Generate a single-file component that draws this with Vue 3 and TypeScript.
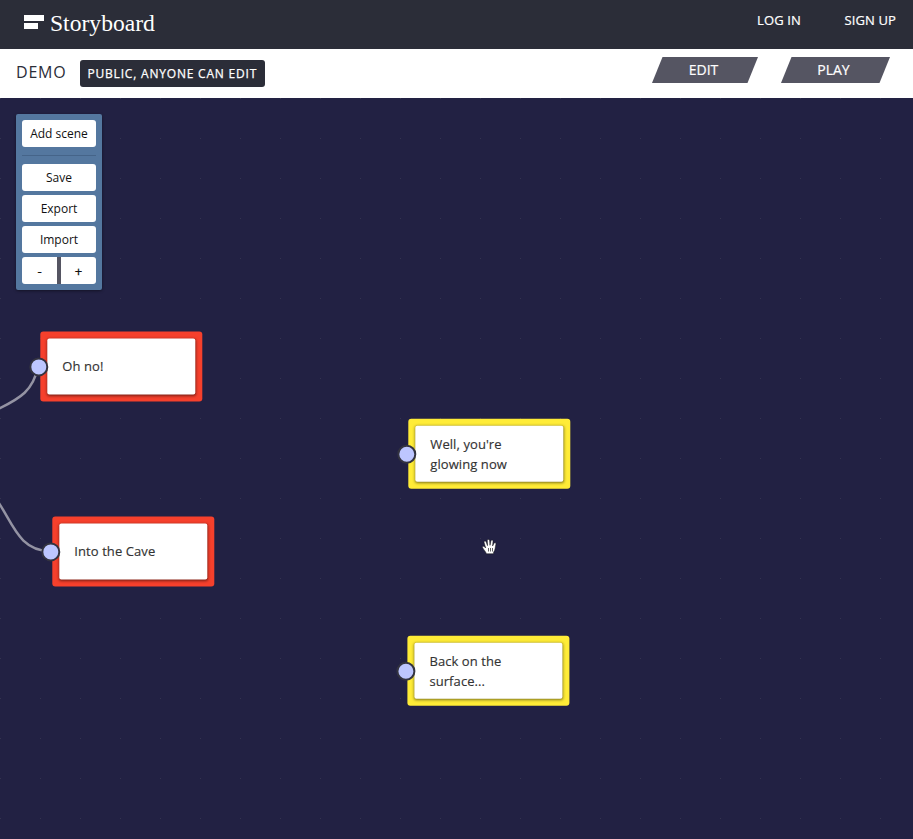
<script setup lang="ts">
interface SceneNode {
  id: number
  text: string
  x: number
  y: number
  color: string
}

const scenes: SceneNode[] = [
  { id: 1, text: 'Oh no!', x: 40.3, y: 233.4, color: '#f6402c' },
  { id: 2, text: 'Into the Cave', x: 52.3, y: 418.4, color: '#f6402c' },
  { id: 3, text: "Well, you're glowing now", x: 408.3, y: 320.7, color: '#ffec37' },
  { id: 4, text: 'Back on the surface...', x: 407.4, y: 537.8, color: '#ffec37' },
]
const links: string[] = ['M-6 313 C22 300 33 292 38 269', 'M-6 398 C12 421 17 453 50 453']
const actions: string[] = ['Save', 'Export', 'Import']
</script>

<template>
  <div class="app">
    <header class="topbar">
      <a class="brand">
        <svg class="logo" width="20" height="15" viewBox="0 0 20 15">
          <path d="M0 0H20V6H0ZM0 8H14V14H0Z" fill="#fff" />
        </svg>
        <span class="brand-name">Storyboard</span>
      </a>
      <nav class="account">
        <a>LOG IN</a>
        <a>SIGN UP</a>
      </nav>
    </header>

    <section class="titlebar">
      <h1>DEMO</h1>
      <span class="badge">PUBLIC, ANYONE CAN EDIT</span>
      <div class="modes">
        <button class="mode edit"><span>EDIT</span></button>
        <button class="mode play"><span>PLAY</span></button>
      </div>
    </section>

    <main class="canvas">
      <svg class="links" width="913" height="741">
        <path v-for="d in links" :key="d" :d="d" />
      </svg>

      <article
        v-for="s in scenes"
        :key="s.id"
        class="scene"
        :style="{ transform: `translate(${s.x}px, ${s.y}px)`, background: s.color }"
      >
        <div class="card">{{ s.text }}</div>
        <i class="port"></i>
      </article>

      <aside class="tools">
        <button>Add scene</button>
        <hr />
        <button v-for="a in actions" :key="a">{{ a }}</button>
        <div class="zoom">
          <button>-</button>
          <button>+</button>
        </div>
      </aside>

      <svg class="hand" width="18" height="18" viewBox="0 0 18 18">
        <path
          d="M5.4 15.8C4.8 13.5 2.6 11.6 1.6 9.7C1 8.4 2.6 7.7 3.5 8.8L4.7 10L3.1 4.6C2.8 3 4.7 2.5 5.2 4L6.5 7.6L6.3 2.6C6.3 1 8.4 1 8.6 2.6L9 7.3L9.9 3C10.2 1.5 12.2 1.9 12 3.4L11.6 8L12.9 5.4C13.6 4.1 15.3 4.8 14.9 6.2C14.2 8.8 14.3 12.2 12.7 14L12.4 15.8Z"
          fill="#fff"
          stroke="#111"
          stroke-width=".5"
        />
        <path d="M7.5 10V13.5M9.5 10V13.5M11.5 10V13.5" stroke="#222" stroke-width=".7" />
      </svg>
    </main>
  </div>
</template>

<style>
body {
  margin: 0;
  overflow: hidden;
}
</style>

<style scoped>
.app {
  width: 913px;
  height: 839px;
  display: flex;
  flex-direction: column;
  font-family: 'Open Sans', 'Noto Sans', sans-serif;
  color: #2b2d38;
}
.app * {
  box-sizing: border-box;
}
button {
  font: inherit;
  border: 0;
  padding: 0;
}
.topbar {
  height: 49px;
  flex: none;
  background: #2b2d38;
  color: #fff;
  display: flex;
  justify-content: space-between;
  padding: 0 17px 0 24px;
}
.brand {
  display: flex;
  gap: 6px;
}
.logo {
  margin-top: 15px;
}
.brand-name {
  font: 23.6px/28px 'Liberation Serif', serif;
  margin-top: 9px;
}
.account {
  display: flex;
  gap: 43.5px;
  font-size: 13px;
  letter-spacing: 0.13px;
  -webkit-text-stroke: 0.2px;
  line-height: 20px;
  padding-top: 10px;
}
.titlebar {
  height: 49px;
  flex: none;
  background: #fff;
  display: flex;
  align-items: flex-start;
  padding: 0 23px 0 16px;
}
h1 {
  width: 51px;
  margin: 12px 13px 0 0;
  font-size: 16px;
  line-height: 22px;
  font-weight: 400;
  letter-spacing: 0.8px;
}
.badge {
  margin-top: 11px;
  width: 185px;
  height: 27px;
  padding-left: 7.5px;
  border-radius: 3px;
  background: #2b2d38;
  color: #fff;
  font-size: 12px;
  -webkit-text-stroke: 0.25px;
  line-height: 27px;
  letter-spacing: 0.8px;
  white-space: nowrap;
}
.modes {
  margin: 8px 0 0 auto;
  display: flex;
  gap: 23px;
}
.mode {
  height: 26px;
  background: #555562;
  color: #fff;
  font-size: 14px;
  -webkit-text-stroke: 0.2px;
  line-height: 26px;
  clip-path: polygon(10.5px 0, 100% 0, calc(100% - 10.5px) 100%, 0 100%);
}
.edit {
  width: 106px;
  padding-right: 3px;
}
.play {
  width: 109px;
  padding-right: 4px;
}
.canvas {
  position: relative;
  flex: 1;
  overflow: hidden;
  background-color: #222143;
  background-image: radial-gradient(circle at 0.5px 0.5px, #34334f 0.7px, transparent 1px);
  background-size: 40px 40px;
}
.links {
  position: absolute;
  left: 0;
  top: 0;
}
.links path {
  fill: none;
  stroke: #9493a3;
  stroke-width: 2.5;
}
.scene {
  position: absolute;
  left: 0;
  top: 0;
  width: 162px;
  height: 70px;
  padding: 7px;
  border-radius: 3px;
}
.card {
  height: 56px;
  display: flex;
  align-items: center;
  padding: 0 40px 1px 15px;
  border-radius: 2px;
  background: #fff;
  box-shadow: 0 1px 3px rgba(0, 0, 0, 0.5);
  color: #333;
  font-size: 13px;
  letter-spacing: 0.08px;
  -webkit-text-stroke: 0.15px;
  line-height: 20px;
}
.port {
  position: absolute;
  left: -11px;
  top: 25.5px;
  width: 19px;
  height: 19px;
  border: 2px solid #333340;
  border-radius: 50%;
  background: #bdc6ff;
}
.tools {
  position: absolute;
  left: 16px;
  top: 16px;
  width: 86px;
  height: 176px;
  padding: 6px;
  border-radius: 2px;
  background: #54779f;
  box-shadow: 0 1px 3px rgba(0, 0, 0, 0.45);
  display: flex;
  flex-direction: column;
  gap: 4px;
}
.tools button {
  height: 27px;
  flex: none;
  border-radius: 3px;
  background: #fff;
  color: #111;
  font-size: 12px;
  line-height: 27px;
}
.tools hr {
  width: 100%;
  height: 1px;
  margin: 4px 0;
  border: 0;
  background: #456489;
}
.tools .zoom {
  height: 27px;
  display: flex;
  justify-content: space-between;
  background: linear-gradient(#555562, #555562) 35px 0 / 4px 27px no-repeat;
}
.tools .zoom button {
  width: 35px;
  padding-top: 1px;
  font-size: 13px;
  -webkit-text-stroke: 0.3px;
}
.tools .zoom button:first-child {
  border-radius: 3px 0 0 3px;
}
.tools .zoom button:last-child {
  border-radius: 0 3px 3px 0;
}
.hand {
  position: absolute;
  left: 481px;
  top: 440px;
}
</style>
